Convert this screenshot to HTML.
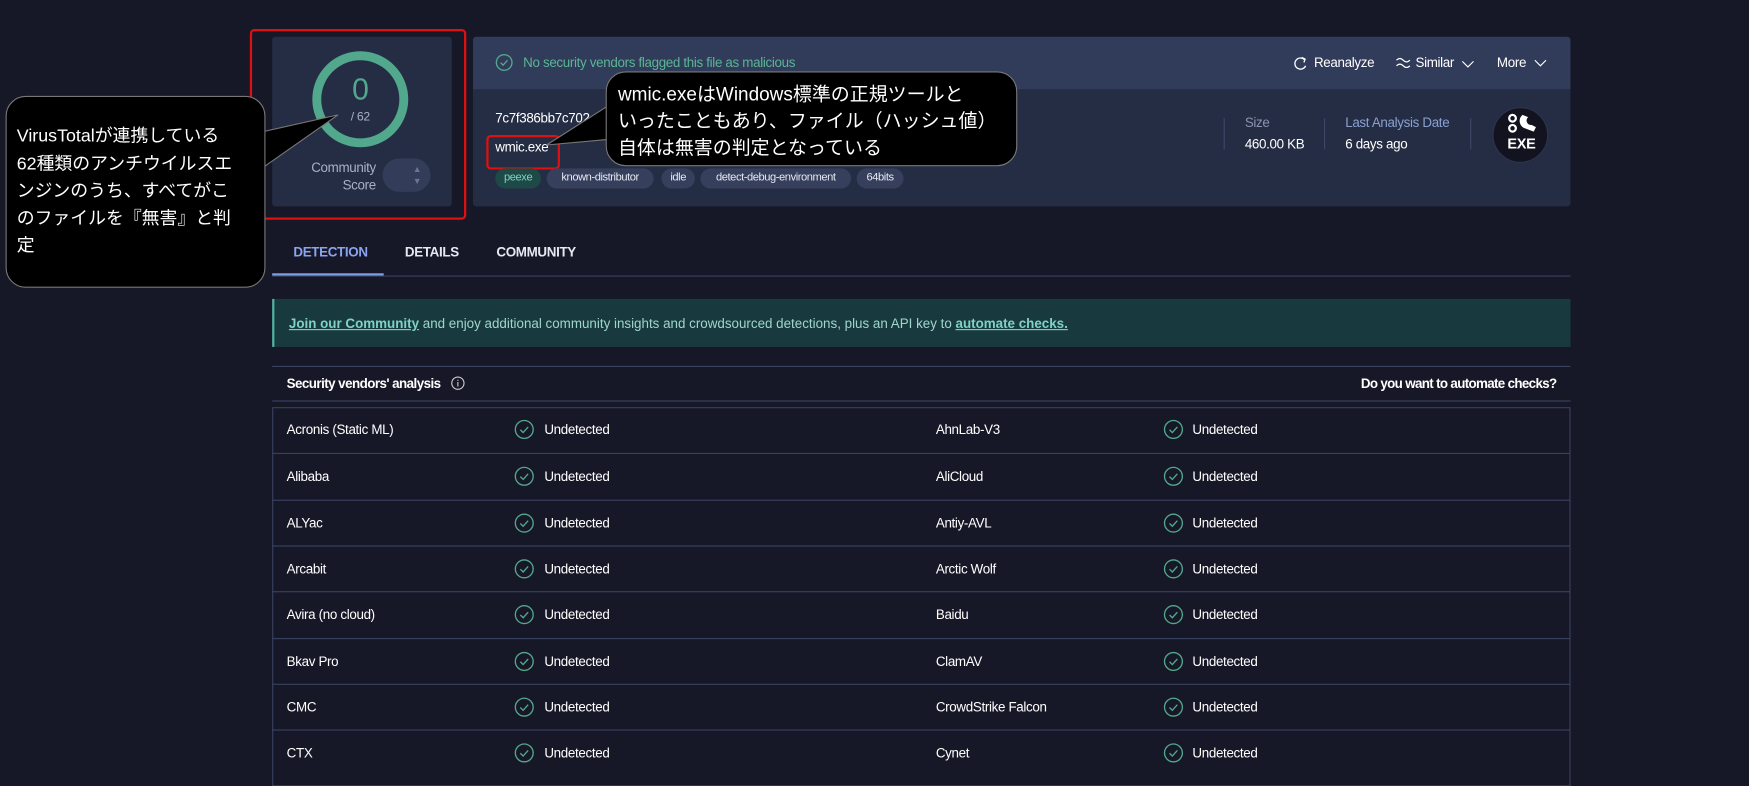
<!DOCTYPE html>
<html><head><meta charset="utf-8">
<style>
html,body{margin:0;padding:0;background:#171827;overflow:hidden;width:1749px;height:778px}
#w{position:absolute;left:0;top:0;width:1568px;height:697px;transform:scale(1.11543);transform-origin:0 0;font-family:"Liberation Sans","Noto Sans CJK JP",sans-serif;color:#fff;letter-spacing:-0.3px}
.a{position:absolute;white-space:nowrap}
.f{font-size:12px}
.tag{position:absolute;top:151px;height:18px;line-height:18px;border-radius:9px;background:#363f5b;color:#e6e9f2;font-size:10px;padding:0;text-align:center;box-sizing:border-box;white-space:nowrap;letter-spacing:-0.4px}
.row{position:absolute;left:244px;width:1164px;height:41px;border-top:1px solid #3a4260;font-size:12px}
.row span{position:absolute;top:13px}
.chk{position:absolute;top:11px;width:18px;height:18px}
.co{position:absolute;background:#000;border:1px solid #777;border-radius:18px;color:#fff;letter-spacing:0}
</style></head><body><div id="w">
<div class="a" style="left:224px;top:26px;width:190px;height:167px;border:2px solid #e01010;border-radius:4px"></div>
<div class="a" style="left:244px;top:33px;width:161px;height:152px;background:#252d44;border-radius:3px"></div>
<svg class="a" style="left:279px;top:45px" width="88" height="88"><circle cx="44" cy="44" r="39" fill="none" stroke="#52a88c" stroke-width="8"/></svg>
<div class="a" style="left:300px;top:65px;width:46px;text-align:center;font-size:27px;color:#52a88c">0</div>
<div class="a" style="left:300px;top:99px;width:46px;text-align:center;font-size:11px;color:#a8b0c8">/ 62</div>
<div class="a" style="left:260px;top:142px;width:77px;text-align:right;font-size:12px;color:#a8b0c8;line-height:16px;white-space:normal">Community<br>Score</div>
<div class="a" style="left:343px;top:142px;width:43px;height:30px;border-radius:15px;background:#333c58"></div>
<div class="a" style="left:370px;top:146px;font-size:8px;color:#6b7494;line-height:11px">▲<br>▼</div>
<div class="a" style="left:424px;top:33px;width:984px;height:152px;background:#252d44;border-radius:3px;overflow:hidden"><div style="height:47px;background:#303c5a"></div></div>
<svg class="a" style="left:444px;top:48px" width="16" height="16"><circle cx="8" cy="8" r="7" fill="none" stroke="#52a88c" stroke-width="1.2"/><path d="M4.8 8.2l2.2 2.2 4-4.4" fill="none" stroke="#52a88c" stroke-width="1.2"/></svg>
<div class="a f" style="left:469px;top:49px;color:#5bb594">No security vendors flagged this file as malicious</div>
<svg class="a" style="left:1159px;top:50px" width="13" height="14"><path d="M10.5 3.5A5 5 0 1 0 11.5 9" fill="none" stroke="#fff" stroke-width="1.2"/><path d="M8 1.5l3 1.5-1 3" fill="none" stroke="#fff" stroke-width="1.2"/></svg>
<div class="a f" style="left:1178px;top:49px">Reanalyze</div>
<svg class="a" style="left:1251px;top:51px" width="14" height="10"><path d="M1 3q3-3 6 0t6 0M1 8q3-3 6 0t6 0" fill="none" stroke="#fff" stroke-width="1.1"/></svg>
<div class="a f" style="left:1269px;top:49px">Similar</div>
<svg class="a" style="left:1310px;top:54px" width="12" height="8"><path d="M1 1l5 5 5-5" fill="none" stroke="#fff" stroke-width="1"/></svg>
<div class="a f" style="left:1342px;top:49px">More</div>
<svg class="a" style="left:1375px;top:53px" width="12" height="8"><path d="M1 1l5 5 5-5" fill="none" stroke="#fff" stroke-width="1"/></svg>
<div class="a f" style="left:444px;top:99px">7c7f386bb7c702</div>
<div class="a f" style="left:444px;top:125px">wmic.exe</div>
<div class="a" style="left:436px;top:121px;width:62px;height:27px;border:2px solid #e01010;border-radius:4px"></div>
<div class="tag" style="left:444px;width:41px;background:#1d4a47;color:#7fd3c3">peexe</div>
<div class="tag" style="left:490px;width:96px">known-distributor</div>
<div class="tag" style="left:593px;width:30px">idle</div>
<div class="tag" style="left:628px;width:135px">detect-debug-environment</div>
<div class="tag" style="left:768px;width:42px">64bits</div>
<div class="a" style="left:1097px;top:106px;width:1px;height:28px;background:#3e4766"></div>
<div class="a" style="left:1187px;top:106px;width:1px;height:28px;background:#3e4766"></div>
<div class="a" style="left:1318px;top:106px;width:1px;height:28px;background:#3e4766"></div>
<div class="a f" style="left:1116px;top:103px;color:#8a93b0">Size</div>
<div class="a f" style="left:1116px;top:122px">460.00 KB</div>
<div class="a f" style="left:1206px;top:103px;color:#8aa0d0">Last Analysis Date</div>
<div class="a f" style="left:1206px;top:122px">6 days ago</div>
<div class="a" style="left:1338px;top:96px;width:50px;height:50px;border-radius:25px;background:#12131f;border:1px solid #2c3350;box-sizing:border-box"></div>
<svg class="a" style="left:1350px;top:100px" width="30" height="22"><circle cx="6" cy="6" r="3" fill="none" stroke="#fff" stroke-width="2"/><circle cx="6" cy="15" r="3" fill="none" stroke="#fff" stroke-width="2"/><path d="M15 3a7 7 0 0 0 2 12l8 3 2-4-4-2a4 4 0 0 1-3-7z" fill="#fff"/></svg>
<div class="a" style="left:1350px;top:121px;width:28px;text-align:center;font-size:13px;font-weight:bold">EXE</div>
<div class="a f" style="left:263px;top:219px;color:#8aa4f0;font-weight:bold">DETECTION</div>
<div class="a f" style="left:363px;top:219px;font-weight:bold;color:#e6e9f2">DETAILS</div>
<div class="a f" style="left:445px;top:219px;font-weight:bold;color:#e6e9f2">COMMUNITY</div>
<div class="a" style="left:244px;top:247px;width:1164px;height:1px;background:#3a4260"></div>
<div class="a" style="left:244px;top:245px;width:100px;height:2px;background:#7d9de8"></div>
<div class="a" style="left:244px;top:268px;width:1164px;height:43px;background:#183a3e;border-left:2px solid #4fb3a0;box-sizing:border-box"></div>
<div class="a f" style="left:259px;top:283px;color:#9fd6cc;letter-spacing:0"><b style="color:#7fd3c3;text-decoration:underline">Join our Community</b> and enjoy additional community insights and crowdsourced detections, plus an API key to <b style="color:#7fd3c3;text-decoration:underline">automate checks.</b></div>
<div class="a" style="left:244px;top:328px;width:1164px;height:1px;background:#3a4260"></div>
<div class="a f" style="left:257px;top:337px;font-weight:bold;letter-spacing:-0.5px">Security vendors' analysis</div>
<svg class="a" style="left:404px;top:337px" width="13" height="13"><circle cx="6.5" cy="6.5" r="5.5" fill="none" stroke="#ccc" stroke-width="1"/><path d="M6.5 5.5v4M6.5 3.5v1" stroke="#ccc" stroke-width="1"/></svg>
<div class="a f" style="left:1220px;top:337px;font-weight:bold;letter-spacing:-0.6px">Do you want to automate checks?</div>
<div class="a" style="left:244px;top:359px;width:1164px;height:1px;background:#3a4260"></div>
<div class="a" style="left:244px;top:365px;width:1164px;height:340px;border:1px solid #3a4260;box-sizing:border-box"></div>
<div id="rows"></div>
<svg class="a" style="left:0;top:0" width="1568" height="697"><polygon points="236,118 303,103 236,150" fill="#000" stroke="#777"/><polygon points="545,95 490,130 545,125" fill="#000" stroke="#777"/></svg>
<div class="co" style="left:5px;top:86px;width:233px;height:172px;box-sizing:border-box;padding:24px 0 0 9px;font-size:16px;line-height:24.5px">VirusTotalが連携している<br>62種類のアンチウイルスエ<br>ンジンのうち、すべてがこ<br>のファイルを『無害』と判<br>定</div>
<div class="co" style="left:543px;top:64px;width:369px;height:85px;box-sizing:border-box;padding:8px 0 0 10px;font-size:17px;line-height:24px">wmic.exeはWindows標準の正規ツールと<br>いったこともあり、ファイル（ハッシュ値）<br>自体は無害の判定となっている</div>
</div>
<script>
var v=[["Acronis (Static ML)","AhnLab-V3"],["Alibaba","AliCloud"],["ALYac","Antiy-AVL"],["Arcabit","Arctic Wolf"],["Avira (no cloud)","Baidu"],["Bkav Pro","ClamAV"],["CMC","CrowdStrike Falcon"],["CTX","Cynet"]];
var ck='<svg class="chk" style="left:XXpx" viewBox="0 0 18 18"><circle cx="9" cy="9" r="8" fill="none" stroke="#52a88c" stroke-width="1.2"/><path d="M5.5 9.3l2.5 2.5 4.5-5" fill="none" stroke="#52a88c" stroke-width="1.2"/></svg>';
var h='';v.forEach(function(r,i){var t=365+i*41.3;h+='<div class="row" style="top:'+t+'px;'+(i==0?'border-top:none':'')+'"><span style="left:13px">'+r[0]+'</span>'+ck.replace('XX',217)+'<span style="left:244px">Undetected</span><span style="left:595px">'+r[1]+'</span>'+ck.replace('XX',799)+'<span style="left:825px">Undetected</span></div>';});
document.getElementById('rows').outerHTML=h;
</script>
</body></html>
